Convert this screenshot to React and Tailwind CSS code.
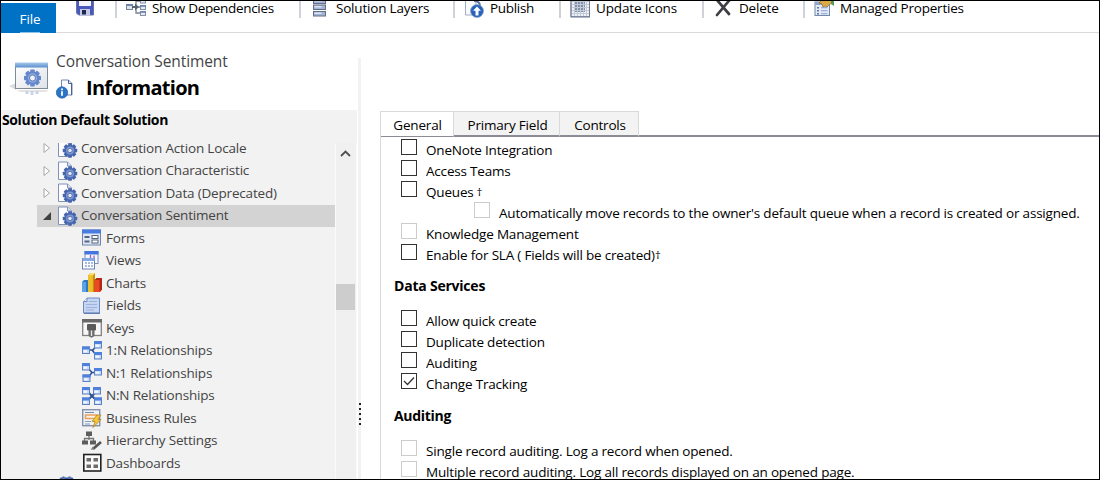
import React from "react";

const Svg = ({ w = 20, h = 20, children, className = "" }) => (
  <svg width={w} height={h} viewBox={`0 0 ${w} ${h}`} className={`block shrink-0 ${className}`}>
    {children}
  </svg>
);

const teeth = [0, 45, 90, 135, 180, 225, 270, 315];

const Gear = ({ cx, cy, r, hole, fill = "#4766ad", inner = "#7c98d4", core = "#dfe6f4" }) => (
  <g>
    {teeth.map((a) => (
      <rect
        key={a}
        x={cx - r * 0.26}
        y={cy - r}
        width={r * 0.52}
        height={r * 0.6}
        rx={r * 0.08}
        fill={fill}
        transform={`rotate(${a} ${cx} ${cy})`}
      />
    ))}
    <circle cx={cx} cy={cy} r={r * 0.8} fill={fill} />
    <circle cx={cx} cy={cy} r={r * 0.55} fill={inner} />
    <circle cx={cx} cy={cy} r={hole} fill={core} stroke="#3b579a" strokeWidth="0.7" />
  </g>
);

const SaveIcon = () => (
  <Svg>
    <path d="M1.500 1h17v16H3.500L1.500 15z" fill="#4858bd" stroke="#6b72a8" />
    <rect x="4" y="0" width="12" height="8" fill="#f3f5fb" />
    <rect x="5" y="11" width="10" height="6.500" fill="#c5cae4" />
    <rect x="7" y="12" width="4" height="4.500" fill="#20264f" />
  </Svg>
);

const DependenciesIcon = () => (
  <Svg>
    <path d="M5 9h9M10 9V3h5M10 9v6h5" fill="none" stroke="#7b8290" strokeWidth="1.300" />
    <rect x="0.500" y="6.500" width="6" height="5" fill="#dfe3ea" stroke="#7b8698" />
    <rect x="0" y="6" width="7" height="2" fill="#6f84ab" />
    <path d="M6 8h3V5.500L13 9l-4 3.500V10H6z" fill="#596273" />
    {[1, 7.5, 13.5].map((y) => (
      <g key={y}>
        <rect x="14.500" y={y} width="5" height="4" fill="#e3e8f1" stroke="#8690a0" />
        <rect x="14" y={y - 0.5} width="6" height="1.800" fill="#6d84b0" />
      </g>
    ))}
  </Svg>
);

const LayersIcon = () => (
  <Svg>
    {[1, 7, 13.5].map((y) => (
      <g key={y}>
        <rect x="3.500" y={y} width="12" height="4.500" fill="#a3b5d6" stroke="#626d86" />
        <rect x="4.500" y={y + 1} width="7" height="1.400" fill="#dfe7f5" />
      </g>
    ))}
  </Svg>
);

const PublishIcon = () => (
  <Svg>
    <path d="M1.500 0v17H12V0" fill="#fafbfd" stroke="#a4aec2" />
    <path d="M10 3c5 0 6 2 6 5" fill="none" stroke="#5e7094" strokeWidth="2" />
    <circle cx="13" cy="13" r="6.500" fill="#2763b8" stroke="#8aa6d2" strokeWidth="0.800" />
    <path d="M13 8.500l4 4.200h-2.500v4.800h-3v-4.800H9z" fill="#fff" />
  </Svg>
);

const GridIcon = () => (
  <Svg>
    <rect x="1" y="0" width="18.500" height="19" fill="#eef1f6" stroke="#8490a6" />
    <rect x="5" y="2" width="10" height="12" fill="#8291aa" />
    {[4, 7, 10, 13, 16].map((v) => (
      <path key={v} d={`M${v + 0.5} 0v19M1 ${v - 0.5}h18`} stroke="#c3cad7" strokeWidth="1" />
    ))}
    <path d="M1 18.700h19M19.500 0v19M1 0v19" stroke="#6f7c95" />
  </Svg>
);

const DeleteIcon = () => (
  <Svg>
    <path d="M4 2l12 14M17 1.500L4 17" stroke="#3f3f45" strokeWidth="2.700" fill="none" strokeLinecap="round" />
  </Svg>
);

const ManagedIcon = () => (
  <Svg>
    <rect x="1" y="4" width="14.500" height="13.500" fill="#e3ebf8" stroke="#7287ac" />
    <rect x="1" y="4" width="14.500" height="3" fill="#92a7cd" />
    {[9, 12, 15].map((y) => (
      <g key={y}>
        <rect x="3" y={y} width="2" height="1.500" fill="#61789f" />
        <rect x="7" y={y} width="6.500" height="1.300" fill="#9db0d2" />
      </g>
    ))}
    <path d="M5 5l4-4h7l3 4-3 1-3 3-2-1-2 1-1-3z" fill="#deaa43" stroke="#8d6d2d" strokeWidth="0.700" />
    <path d="M17 2h3v6l-3-2z" fill="#4f9b52" />
  </Svg>
);

const EntityIcon = () => (
  <Svg>
    <path d="M0.500 1h9l4 4v13.500h-13z" fill="#fdfdff" stroke="#7f92b8" />
    <path d="M9.500 1v4h4" fill="#dbe4f4" stroke="#7f92b8" />
    <Gear cx={12} cy={12.500} r={7.200} hole={2.200} />
  </Svg>
);

const GearsIcon = () => (
  <Svg>
    <Gear cx={5.500} cy={6} r={4.500} hole={1.500} />
    <Gear cx={11.500} cy={6} r={4.500} hole={1.500} />
  </Svg>
);

const FormsIcon = () => (
  <Svg>
    <rect x="0.500" y="2" width="18" height="15" fill="#dfe7f5" stroke="#6f84ac" />
    <rect x="0" y="1.500" width="19" height="4" fill="#4a7be0" />
    {[8, 12.500].map((y) => (
      <g key={y}>
        <rect x="2.500" y={y} width="5" height="2" fill="#56647f" />
        <rect x="10" y={y - 0.5} width="6" height="3" fill="#fff" stroke="#56647f" />
      </g>
    ))}
  </Svg>
);

const ViewsIcon = () => (
  <Svg>
    <rect x="3" y="0.500" width="13" height="12" fill="#f3f6fc" stroke="#7c92bd" />
    <rect x="2.500" y="0" width="14" height="3.500" fill="#4474dd" />
    <path d="M8.500 4v3M12 4.500V7" stroke="#9a62ba" strokeWidth="1.300" />
    <rect x="0.500" y="7.500" width="12" height="10.500" fill="#fbfcff" stroke="#6c84b0" />
    <rect x="0.500" y="7" width="12" height="3" fill="#86a9e6" />
    {[12, 15].map((y) => (
      <path key={y} d={`M3 ${y}h2M6 ${y}h2M9 ${y}h2`} stroke="#8fa5cf" strokeWidth="1.500" />
    ))}
  </Svg>
);

const ChartsIcon = () => (
  <Svg>
    <path d="M0 9l2-2h4v12H0z" fill="#2f79c6" />
    <path d="M0 9h4v10H0z" fill="#5aa5e8" />
    <path d="M6 2.500L8.500 0H13v19H6z" fill="#c8920a" />
    <path d="M6 2.500h4.800V19H6z" fill="#efc02d" />
    <path d="M6.500 2.500L8.500 0H13l-2 2.500z" fill="#ffe06a" />
    <path d="M12.500 7l2-2H20v11.500L18 19h-5.500z" fill="#b32811" />
    <path d="M12.500 7h5v12h-5z" fill="#ea4a24" />
  </Svg>
);

const FieldsIcon = () => (
  <Svg>
    <path d="M5 2h12.500v15h-16V5.500z" fill="#c5d5f2" stroke="#6d8cc6" />
    <path d="M1.500 5.500H5V2" fill="#f0f5ff" stroke="#6d8cc6" />
    <path d="M7 5.500h8M4 8.500h11M4 11.500h11M4 14h8" stroke="#9bb3df" />
    <path d="M2 17.300h16" stroke="#526fa6" />
  </Svg>
);

const KeysIcon = () => (
  <Svg>
    <rect x="0.700" y="2" width="18.600" height="15.500" fill="#f7f7f7" stroke="#808080" strokeWidth="1.300" />
    <rect x="0" y="1" width="20" height="3.500" fill="#696969" />
    <rect x="5" y="6" width="9" height="6.500" rx="1" fill="#5a5a5a" />
    <path d="M6.500 12v6l3 1.700 3-1.700v-6z" fill="#6a6a6a" />
    <path d="M9.500 12.500v5.500" stroke="#e4e4e4" strokeWidth="1.400" />
  </Svg>
);

const Node = ({ x, y }) => (
  <g>
    <rect x={x + 0.5} y={y + 0.5} width="7" height="6.500" fill="#c9daf7" stroke="#5d80c2" />
    <rect x={x} y={y} width="8" height="3" fill="#4f80da" />
    <rect x={x + 1.5} y={y + 3.8} width="3.500" height="2" fill="#f4f8ff" />
  </g>
);

const OneToManyIcon = () => (
  <Svg>
    <path d="M6 9h5l4-5M10 9l5 6" fill="none" stroke="#2d4f8e" strokeWidth="1.600" />
    <Node x={0} y={5.500} />
    <Node x={12} y={0} />
    <Node x={12} y={11} />
  </Svg>
);

const ManyToOneIcon = () => (
  <Svg>
    <path d="M5 4l5 5.500h4M5 16l5-6.500" fill="none" stroke="#2d4f8e" strokeWidth="1.600" />
    <Node x={0} y={0} />
    <Node x={0.500} y={11.500} />
    <Node x={12} y={5} />
  </Svg>
);

const ManyToManyIcon = () => (
  <Svg>
    <path d="M5 5l10 10M15 5L5 15" stroke="#2d4f8e" strokeWidth="2" />
    <Node x={0} y={1} />
    <Node x={11} y={1} />
    <Node x={0} y={11.500} />
    <Node x={12} y={11.500} />
  </Svg>
);

const RulesIcon = () => (
  <Svg>
    <rect x="0.700" y="1.700" width="17" height="16" fill="#eef1f6" stroke="#8391ad" strokeWidth="1.400" />
    <path d="M3 4.500h9" stroke="#7889a9" />
    <rect x="3.500" y="7" width="11" height="3.500" fill="#fff1df" stroke="#e6a25d" strokeWidth="1.500" />
    <path d="M3 13.500h6M3 16h5" stroke="#8b9ab5" />
    <path d="M15 7h4l-3 4.500h3L11 19.500l2-6h-3z" fill="#f6c638" stroke="#a47b1f" strokeWidth="0.700" />
  </Svg>
);

const HierarchyIcon = () => (
  <Svg>
    <path d="M7 4v5M2.500 11V7.500h9V11" fill="none" stroke="#757575" strokeWidth="1.300" />
    <rect x="4" y="0.500" width="6" height="4.500" fill="#5d5d5d" />
    <rect x="0" y="9.500" width="6" height="4" fill="#5d5d5d" />
    <rect x="8" y="9.500" width="6" height="4" fill="#5d5d5d" />
    <path d="M19 11l-8 7" stroke="#555" strokeWidth="2.700" />
    <path d="M11 15.500l-2.500 3.500 4-1z" fill="#777" />
  </Svg>
);

const DashboardsIcon = () => (
  <Svg>
    <rect x="1.800" y="1.500" width="17" height="16.500" fill="#fafafa" stroke="#222" strokeWidth="1.600" />
    {[4.5, 11.5].map((x) =>
      [5, 11.5].map((y) => <rect key={`${x}-${y}`} x={x} y={y} width="4.500" height="3.500" fill="#6c6c6c" />)
    )}
  </Svg>
);

const EntityLargeIcon = () => (
  <Svg w={42} h={36}>
    <defs>
      <linearGradient id="winbar" x1="0" y1="0" x2="0" y2="1">
        <stop offset="0" stopColor="#a9c8ea" />
        <stop offset="1" stopColor="#5b8fce" />
      </linearGradient>
      <linearGradient id="winbody" x1="0" y1="0" x2="1" y2="1">
        <stop offset="0" stopColor="#ffffff" />
        <stop offset="1" stopColor="#dfe3e8" />
      </linearGradient>
    </defs>
    <path d="M0 26l7-3v7z" fill="#dcdcdc" />
    <path d="M8 30h32l-3 2H11z" fill="#e4e4e4" />
    <rect x="6.500" y="3.500" width="32" height="25" fill="url(#winbody)" stroke="#7f8b98" />
    <rect x="6" y="2.500" width="33" height="5" fill="url(#winbar)" />
    <path d="M18 31v3M23 31v4M28 31v3" stroke="#c9d2e6" strokeWidth="3" />
    <Gear cx={23.500} cy={18} r={8.500} hole={3} fill="#6487cb" inner="#8fabdf" core="#eef2f9" />
  </Svg>
);

const InfoPageIcon = () => (
  <Svg w={18} h={20} className="mt-[2px]">
    <path d="M5.500 1h7l3.500 3.500V16H5.500z" fill="#fbfcff" stroke="#7188b0" />
    <path d="M12.500 1v3.500H16M15.500 5v11" fill="none" stroke="#49628f" />
    <circle cx="6" cy="13.500" r="5.700" fill="#2a75c8" stroke="#1c5599" strokeWidth="0.600" />
    <path d="M6 12.300v4.500M6 9.600v1.600" stroke="#fff" strokeWidth="1.800" />
  </Svg>
);

const actions = [
  { label: "Show Dependencies", icon: DependenciesIcon, width: "w-[184px]", tracking: "tracking-[-0.32px]" },
  { label: "Solution Layers", icon: LayersIcon, width: "w-[154px]", tracking: "tracking-[-0.2px]" },
  { label: "Publish", icon: PublishIcon, width: "w-[106px]", tracking: "tracking-[-0.3px]" },
  { label: "Update Icons", icon: GridIcon, width: "w-[143px]", tracking: "tracking-[-0.15px]" },
  { label: "Delete", icon: DeleteIcon, width: "w-[101px]", tracking: "tracking-[-0.2px]" },
  { label: "Managed Properties", icon: ManagedIcon, width: "w-[200px]", tracking: "tracking-[-0.2px]" },
];

const entities = [
  { label: "Conversation Action Locale" },
  { label: "Conversation Characteristic" },
  { label: "Conversation Data (Deprecated)" },
  { label: "Conversation Sentiment", open: true },
];

const children = [
  ["Forms", FormsIcon],
  ["Views", ViewsIcon],
  ["Charts", ChartsIcon],
  ["Fields", FieldsIcon],
  ["Keys", KeysIcon],
  ["1:N Relationships", OneToManyIcon],
  ["N:1 Relationships", ManyToOneIcon],
  ["N:N Relationships", ManyToManyIcon],
  ["Business Rules", RulesIcon],
  ["Hierarchy Settings", HierarchyIcon],
  ["Dashboards", DashboardsIcon],
];

const Toolbar = () => (
  <header className="flex h-8 shrink-0 border-b border-[#d9d9d9]">
    <div className="mt-[2px] flex h-[30px] w-[55px] shrink-0 flex-col items-center bg-[#0072c6] pl-[3px] text-white">
      <span className="flex h-[29px] items-center pt-[5px] text-[13.5px] tracking-[-0.1px]">File</span>
      <span className="h-px w-5 shrink-0 bg-[#8fc3ea]" />
    </div>
    <div className="-mt-[3px] flex h-5">
      <div className="w-[59px] pl-[19px]"><SaveIcon /></div>
      {actions.map(({ label, icon: Icon, width, tracking }) => (
        <div key={label} className={`flex shrink-0 items-center border-l-2 border-[#cfd2d8] pl-[9px] ${width}`}>
          <Icon />
          <span className={`pl-[6px] pt-px text-[13.5px] text-black ${tracking}`}>{label}</span>
        </div>
      ))}
    </div>
  </header>
);

const EntityRow = ({ label, open }) => (
  <div className={`ml-9 flex h-[22.5px] shrink-0 items-center pl-[6px] ${open ? "bg-[#d3d3d3]" : ""}`}>
    <Svg w={8} h={12}>
      {open ? (
        <path d="M8 2v8H0z" fill="#404040" />
      ) : (
        <path d="M1 1.500v9L6.500 6z" fill="#fff" stroke="#a6a6a6" />
      )}
    </Svg>
    <span className="pl-[7px]"><EntityIcon /></span>
    <span className="pl-[3px]">{label}</span>
  </div>
);

const Tree = () => (
  <div className="flex min-h-0 grow">
    <div className="flex w-[334px] flex-col overflow-hidden">
      <div className="-mt-[6px] flex flex-col text-[13.5px] tracking-[-0.18px] text-[#444]">
        {entities.map((e) => <EntityRow key={e.label} {...e} />)}
        {children.map(([label, Icon]) => (
          <div key={label} className="flex h-[22.5px] shrink-0 items-center pl-[81px]">
            <Icon />
            <span className="pl-1">{label}</span>
          </div>
        ))}
        <div className="h-[22.5px] shrink-0 pl-[57px]">
          <GearsIcon />
        </div>
      </div>
    </div>
    <div className="flex w-[22px] flex-col border-x border-[#fafafa] bg-[#f0f0f0] pt-[5px]">
      <Svg w={18} h={10}>
        <path d="M5 8l4.500-4.500L14 8" fill="none" stroke="#505050" strokeWidth="1.800" />
      </Svg>
      <div className="mt-[126px] h-[26px] w-[19px] bg-[#cdcdcd]" />
    </div>
  </div>
);

const Check = ({ label, disabled, checked, indent, dagger, gap }) => (
  <label className={`flex h-[21px] shrink-0 items-start ${indent ? "pl-[93px]" : "pl-5"}`}>
    <span className={`flex size-4 shrink-0 items-center justify-center border bg-white ${disabled ? "border-[#cccccc]" : "border-[#333]"}`}>
      {checked && (
        <Svg w={14} h={14}>
          <path d="M2 7l3.500 3.500L12 3.500" fill="none" stroke="#333" strokeWidth="1.300" />
        </Svg>
      )}
    </span>
    <span className="flex h-6 items-center whitespace-pre pl-[9px]">
      {label}
      {dagger && <span className={`-mt-[2px] text-[11.5px] ${gap ? "pl-[3px]" : ""}`}>†</span>}
    </span>
  </label>
);

const Tab = ({ label, active, width }) => (
  <div
    className={`flex h-[26px] items-center justify-center border-r border-t ${width} ${
      active ? "border-[#d9d9d9] bg-white" : "border-[#d9d9d9] border-b-2 border-b-[#8c8c96] bg-[#f3f3f3]"
    }`}
  >
    <span className={active ? "pl-px pt-[4px]" : "pl-[2px] pt-[5px]"}>{label}</span>
  </div>
);

const Settings = () => (
  <main className="mt-[78px] flex grow flex-col overflow-hidden border-l border-[#d9d9d9] text-[13.5px] tracking-[-0.19px] text-black">
    <div className="flex shrink-0">
      <Tab label="General" active width="w-[73px] border-b border-b-[#8c8c96]" />
      <Tab label="Primary Field" width="w-[106px]" />
      <Tab label="Controls" width="w-[79px]" />
      <div className="h-[26px] grow border-b-2 border-[#8c8c96]" />
    </div>
    <div className="flex shrink-0 flex-col pt-[2px]">
      <Check label="OneNote Integration" />
      <Check label="Access Teams" />
      <Check label="Queues" dagger gap />
      <Check label="Automatically move records to the owner's default queue when a record is created or assigned." disabled indent />
      <Check label="Knowledge Management" disabled />
      <Check label="Enable for SLA ( Fields will be created)" dagger />
      <h2 className="h-[45px] pl-[13px] text-[14px] font-bold leading-[41px] tracking-[-0.22px]">Data Services</h2>
      <Check label="Allow quick create" />
      <Check label="Duplicate detection" />
      <Check label="Auditing" />
      <Check label="Change Tracking" checked />
      <h2 className="h-[46px] pl-[13px] text-[14px] font-bold leading-[43px] tracking-[-0.3px]">Auditing</h2>
      <Check label="Single record auditing. Log a record when opened." disabled />
      <Check label="Multiple record auditing. Log all records displayed on an opened page." disabled />
    </div>
  </main>
);

export default function App() {
  return (
    <div className="flex h-[480px] w-[1100px] flex-col overflow-hidden border border-black bg-white font-['Open_Sans',sans-serif] leading-none whitespace-nowrap">
      <Toolbar />
      <div className="flex min-h-0 grow">
        <aside className="flex w-[356px] shrink-0 flex-col">
          <div className="flex h-[77px] shrink-0 pl-2 pt-[27px]">
            <EntityLargeIcon />
            <div className="flex flex-col pl-[5px]">
              <span className="-mt-[8px] h-[18px] text-[15.5px] leading-[18px] tracking-[-0.1px] text-[#444]">Conversation Sentiment</span>
              <div className="mt-[7px] flex items-center">
                <InfoPageIcon />
                <span className="pl-3 text-[20px] font-bold leading-5 tracking-[-0.7px] text-black">Information</span>
              </div>
            </div>
          </div>
          <div className="flex min-h-0 grow flex-col bg-[#f2f2f2]">
            <div className="h-[33px] shrink-0 pl-px text-[14px] font-bold leading-[20px] tracking-[-0.38px] text-black">Solution Default Solution</div>
            <Tree />
          </div>
        </aside>
        <div className="mr-[19px] mt-[25px] flex w-1 shrink-0 flex-col items-center gap-[3px] border-l border-white bg-[#f2f2f2] pt-[345px]">
          {[0, 1, 2, 3, 4].map((i) => <span key={i} className="h-[2px] w-[2px] shrink-0 bg-[#222]" />)}
        </div>
        <Settings />
      </div>
    </div>
  );
}
